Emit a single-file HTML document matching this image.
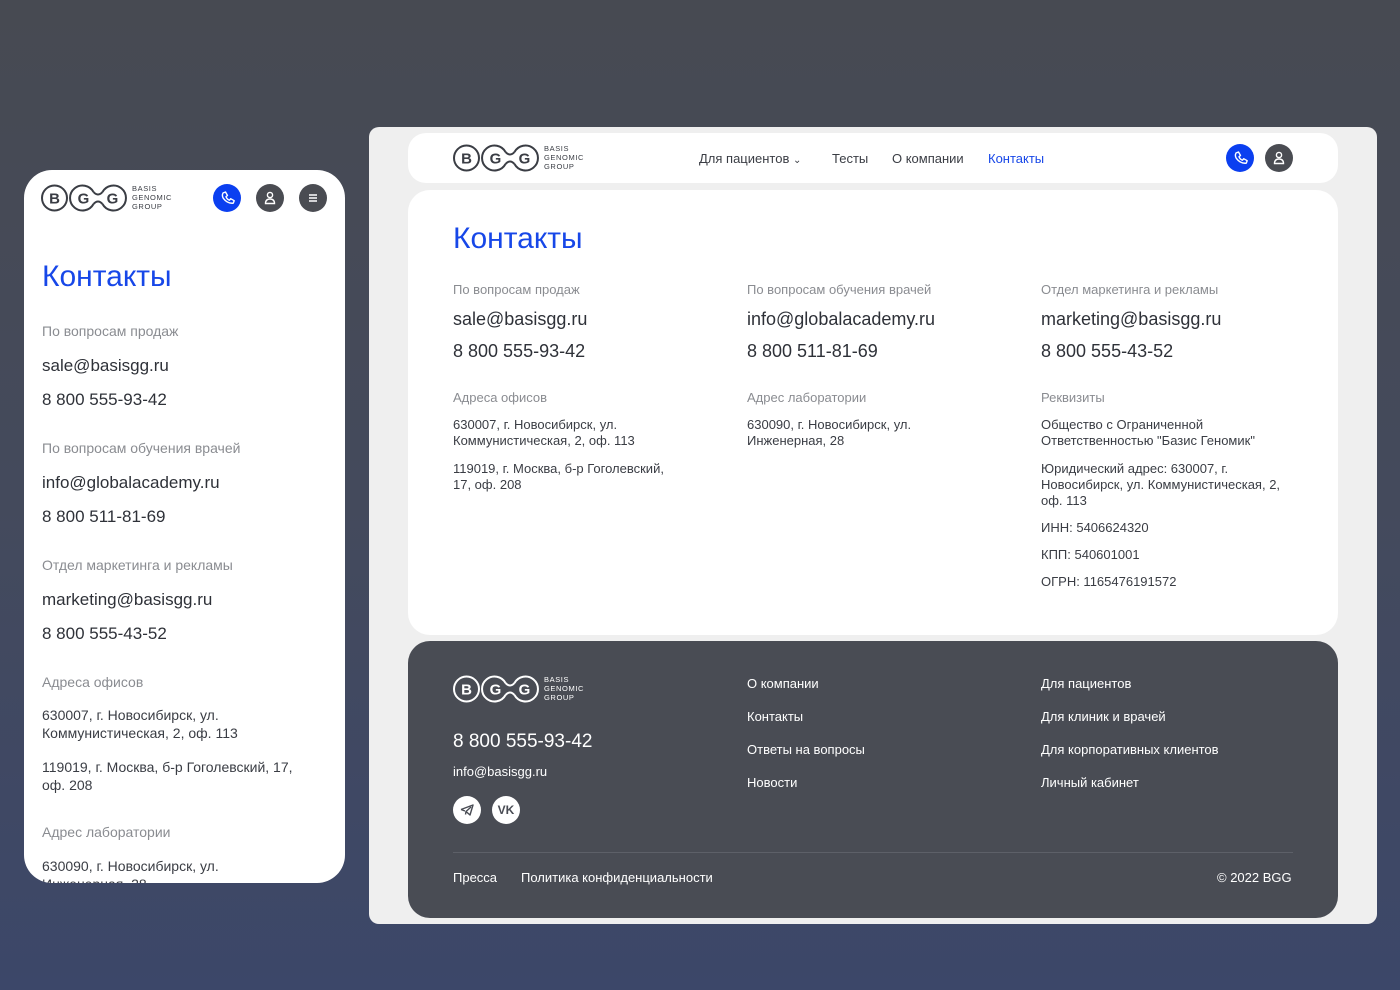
<!DOCTYPE html>
<html><head><meta charset="utf-8"><style>
*{margin:0;padding:0;box-sizing:border-box}
body{width:1400px;height:990px;overflow:hidden;background:linear-gradient(180deg,#474a52 0%,#444a5c 50%,#3c4769 100%);font-family:"Liberation Sans","DejaVu Sans",sans-serif;position:relative;color:#3a3d44}
.abs{position:absolute}
.frame{left:369px;top:127px;width:1008px;height:797px;background:#efefef;border-radius:10px}
.hdr{left:408px;top:133px;width:930px;height:50px;background:#fff;border-radius:18px}
.main{left:408px;top:190px;width:930px;height:445px;background:#fff;border-radius:22px}
.foot{left:408px;top:641px;width:930px;height:277px;background:#494c54;border-radius:22px;color:#fff}
.mob{left:24px;top:170px;width:321px;height:713px;background:#fff;border-radius:28px;overflow:hidden}
.circ{position:absolute;width:28px;height:28px;border-radius:50%;display:flex;align-items:center;justify-content:center}
.lbl{color:#8a8c91;font-size:13px}
.big{color:#2e3138;font-size:18px}
.sm{color:#3a3d44;font-size:13px;line-height:16px}
h1{font-weight:400;color:#1747e8;font-size:30px}
.nav{font-size:13px;color:#3a3d44}
.fl{font-size:13px;color:#fff}
</style></head><body>
<svg width="0" height="0" style="position:absolute"><defs>
<g id="logo">
<circle cx="13.5" cy="16" r="12.5" fill="none" stroke="currentColor" stroke-width="2"/>
<path d="M52.5 10 A12.5 12.5 0 1 0 52.5 22" fill="none" stroke="currentColor" stroke-width="2"/>
<path d="M61.5 10 A12.5 12.5 0 1 1 61.5 22" fill="none" stroke="currentColor" stroke-width="2"/>
<path d="M52.5 10 Q57 15 61.5 10 M52.5 22 Q57 17 61.5 22" fill="none" stroke="currentColor" stroke-width="2"/>
<text x="13.5" y="21.5" text-anchor="middle" font-family="Liberation Sans" font-weight="700" font-size="15" fill="currentColor">B</text>
<text x="42.5" y="21.5" text-anchor="middle" font-family="Liberation Sans" font-weight="700" font-size="15" fill="currentColor">G</text>
<text x="71.5" y="21.5" text-anchor="middle" font-family="Liberation Sans" font-weight="700" font-size="15" fill="currentColor">G</text>
<text x="91" y="9" font-family="Liberation Sans" font-size="7.5" letter-spacing="0.6" fill="currentColor">BASIS</text>
<text x="91" y="18" font-family="Liberation Sans" font-size="7.5" letter-spacing="0.6" fill="currentColor">GENOMIC</text>
<text x="91" y="27" font-family="Liberation Sans" font-size="7.5" letter-spacing="0.6" fill="currentColor">GROUP</text>
</g>
<g id="phone"><path d="M-4 -5 l2.5 -1 l2 3.5 l-1.5 1.2 q1 2.5 3.5 3.5 l1.2 -1.5 l3.5 2 l-1 2.5 q-6 0.5 -10 -5 q-1.5 -2.5 -0.2 -5.2z" fill="none" stroke="#fff" stroke-width="1.4" stroke-linejoin="round"/></g>
<g id="user"><circle cx="0" cy="-3" r="2.6" fill="none" stroke="#fff" stroke-width="1.4"/><path d="M-4.5 5.5 q0 -4.5 4.5 -4.5 q4.5 0 4.5 4.5z" fill="none" stroke="#fff" stroke-width="1.4"/></g>
</defs></svg>

<div class="abs frame"></div>
<div class="abs hdr">
<svg class="abs" style="left:45px;top:9px;color:#3a3d44" width="140" height="32"><use href="#logo"/></svg>
<div class="abs nav" style="left:291px;top:18px">Для пациентов <span style="font-size:10px">&#8964;</span></div>
<div class="abs nav" style="left:424px;top:18px">Тесты</div>
<div class="abs nav" style="left:484px;top:18px">О компании</div>
<div class="abs nav" style="left:580px;top:18px;color:#1747e8">Контакты</div>
<div class="circ" style="left:818px;top:11px;background:#0b3ff0"><svg width="20" height="20" viewBox="-10 -10 20 20"><use href="#phone"/></svg></div>
<div class="circ" style="left:857px;top:11px;background:#4a4c52"><svg width="20" height="20" viewBox="-10 -10 20 20"><use href="#user"/></svg></div>
</div>

<div class="abs main">
<h1 class="abs" style="left:45px;top:32px">Контакты</h1>
<div class="abs lbl" style="left:45px;top:92px">По вопросам продаж</div>
<div class="abs big" style="left:45px;top:119px">sale@basisgg.ru</div>
<div class="abs big" style="left:45px;top:151px">8 800 555-93-42</div>
<div class="abs lbl" style="left:339px;top:92px">По вопросам обучения врачей</div>
<div class="abs big" style="left:339px;top:119px">info@globalacademy.ru</div>
<div class="abs big" style="left:339px;top:151px">8 800 511-81-69</div>
<div class="abs lbl" style="left:633px;top:92px">Отдел маркетинга и рекламы</div>
<div class="abs big" style="left:633px;top:119px">marketing@basisgg.ru</div>
<div class="abs big" style="left:633px;top:151px">8 800 555-43-52</div>
<div class="abs lbl" style="left:45px;top:200px">Адреса офисов</div>
<div class="abs sm" style="left:45px;top:227px">630007, г. Новосибирск, ул.<br>Коммунистическая, 2, оф. 113</div>
<div class="abs sm" style="left:45px;top:271px">119019, г. Москва, б-р Гоголевский,<br>17, оф. 208</div>
<div class="abs lbl" style="left:339px;top:200px">Адрес лаборатории</div>
<div class="abs sm" style="left:339px;top:227px">630090, г. Новосибирск, ул.<br>Инженерная, 28</div>
<div class="abs lbl" style="left:633px;top:200px">Реквизиты</div>
<div class="abs sm" style="left:633px;top:227px">Общество с Ограниченной<br>Ответственностью "Базис Геномик"</div>
<div class="abs sm" style="left:633px;top:271px">Юридический адрес: 630007, г.<br>Новосибирск, ул. Коммунистическая, 2,<br>оф. 113</div>
<div class="abs sm" style="left:633px;top:330px">ИНН: 5406624320</div>
<div class="abs sm" style="left:633px;top:357px">КПП: 540601001</div>
<div class="abs sm" style="left:633px;top:384px">ОГРН: 1165476191572</div>
</div>

<div class="abs foot">
<svg class="abs" style="left:45px;top:32px;color:#fff" width="140" height="32"><use href="#logo"/></svg>
<div class="abs" style="left:45px;top:90px;font-size:19px">8 800 555-93-42</div>
<div class="abs fl" style="left:45px;top:123px">info@basisgg.ru</div>
<div class="circ" style="left:45px;top:155px;background:#fff"><svg width="16" height="16" viewBox="0 0 16 16"><path d="M2 7.5 L14 3 L11 13 L7 9.5 L12 5 M7 9.5 L6.5 12.5 M2 7.5 L6 9" fill="none" stroke="#494c54" stroke-width="1.4" stroke-linejoin="round"/></svg></div>
<div class="circ" style="left:84px;top:155px;background:#fff;font-size:12px;font-weight:700;color:#494c54">VK</div>
<div class="abs fl" style="left:339px;top:35px">О компании</div>
<div class="abs fl" style="left:339px;top:68px">Контакты</div>
<div class="abs fl" style="left:339px;top:101px">Ответы на вопросы</div>
<div class="abs fl" style="left:339px;top:134px">Новости</div>
<div class="abs fl" style="left:633px;top:35px">Для пациентов</div>
<div class="abs fl" style="left:633px;top:68px">Для клиник и врачей</div>
<div class="abs fl" style="left:633px;top:101px">Для корпоративных клиентов</div>
<div class="abs fl" style="left:633px;top:134px">Личный кабинет</div>
<div class="abs" style="left:45px;top:211px;width:840px;height:1px;background:#5d6068"></div>
<div class="abs fl" style="left:45px;top:229px">Пресса</div>
<div class="abs fl" style="left:113px;top:229px">Политика конфиденциальности</div>
<div class="abs fl" style="left:809px;top:229px">© 2022 BGG</div>
</div>

<div class="abs mob">
<svg class="abs" style="left:17px;top:12px;color:#3a3d44" width="140" height="32"><use href="#logo"/></svg>
<div class="circ" style="left:189px;top:14px;background:#0b3ff0"><svg width="20" height="20" viewBox="-10 -10 20 20"><use href="#phone"/></svg></div>
<div class="circ" style="left:232px;top:14px;background:#4a4c52"><svg width="20" height="20" viewBox="-10 -10 20 20"><use href="#user"/></svg></div>
<div class="circ" style="left:275px;top:14px;background:#4a4c52"><svg width="20" height="20" viewBox="0 0 20 20"><path d="M6 7h8M6 10h8M6 13h8" stroke="#fff" stroke-width="1.5"/></svg></div>
<h1 class="abs" style="left:18px;top:90px">Контакты</h1>
<div class="abs lbl" style="left:18px;top:153px;font-size:14px">По вопросам продаж</div>
<div class="abs big" style="left:18px;top:186px;font-size:17px">sale@basisgg.ru</div>
<div class="abs big" style="left:18px;top:220px;font-size:17px">8 800 555-93-42</div>
<div class="abs lbl" style="left:18px;top:270px;font-size:14px">По вопросам обучения врачей</div>
<div class="abs big" style="left:18px;top:303px;font-size:17px">info@globalacademy.ru</div>
<div class="abs big" style="left:18px;top:337px;font-size:17px">8 800 511-81-69</div>
<div class="abs lbl" style="left:18px;top:387px;font-size:14px">Отдел маркетинга и рекламы</div>
<div class="abs big" style="left:18px;top:420px;font-size:17px">marketing@basisgg.ru</div>
<div class="abs big" style="left:18px;top:454px;font-size:17px">8 800 555-43-52</div>
<div class="abs lbl" style="left:18px;top:504px;font-size:14px">Адреса офисов</div>
<div class="abs sm" style="left:18px;top:536px;font-size:14px;line-height:18px">630007, г. Новосибирск, ул.<br>Коммунистическая, 2, оф. 113</div>
<div class="abs sm" style="left:18px;top:588px;font-size:14px;line-height:18px">119019, г. Москва, б-р Гоголевский, 17,<br>оф. 208</div>
<div class="abs lbl" style="left:18px;top:654px;font-size:14px">Адрес лаборатории</div>
<div class="abs sm" style="left:18px;top:687px;font-size:14px;line-height:18px">630090, г. Новосибирск, ул.<br>Инженерная, 28</div>
</div>
</body></html>
